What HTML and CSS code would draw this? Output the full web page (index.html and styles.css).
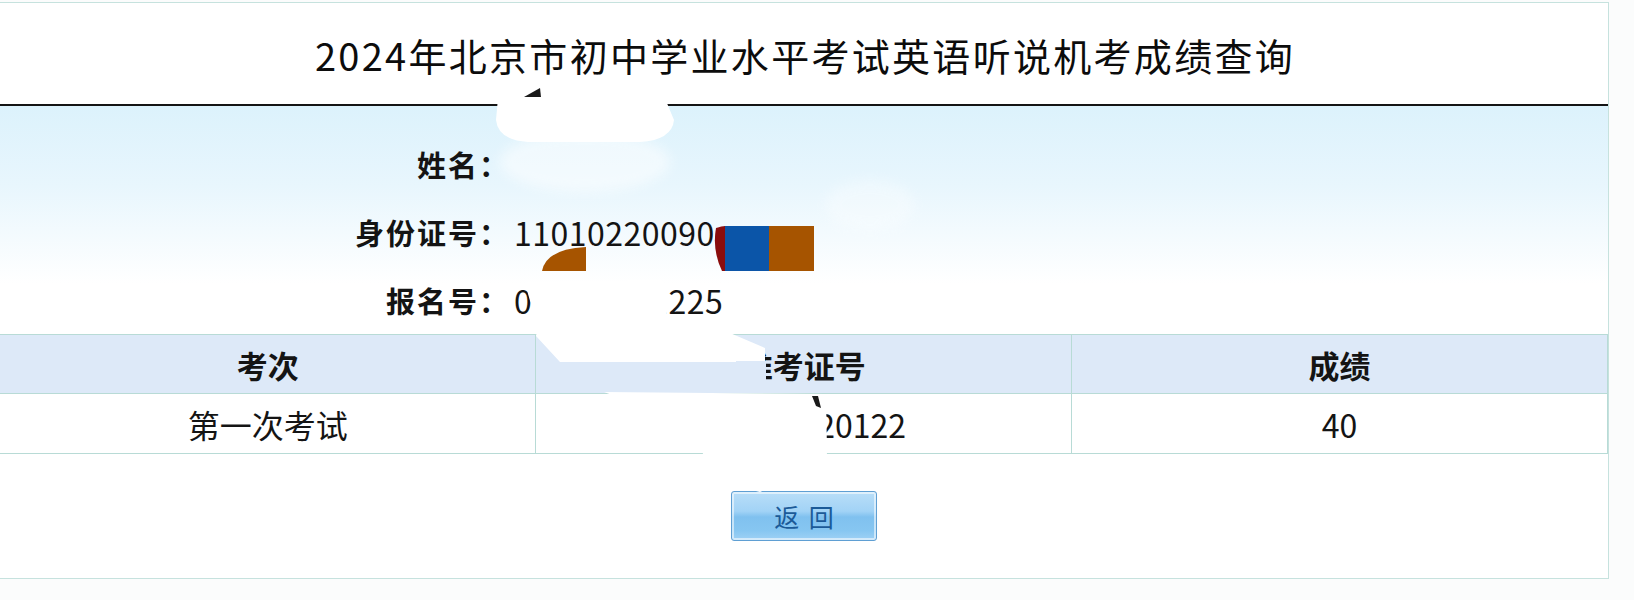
FILE: index.html
```html
<!DOCTYPE html>
<html lang="zh-CN">
<head>
<meta charset="utf-8">
<title>2024年北京市初中学业水平考试英语听说机考成绩查询</title>
<link rel="stylesheet" href="styles.css">
</head>
<body>
<div class="page">
  <div class="box">
    <div class="header">
      <h1 class="title">2024年北京市初中学业水平考试英语听说机考成绩查询</h1>
    </div>
    <div class="info">
      <div class="row"><span class="label">姓名：</span><span class="value"></span></div>
      <div class="row"><span class="label">身份证号：</span><span class="value">11010220090</span></div>
      <div class="row"><span class="label">报名号：</span><span class="value">0<span class="gap"></span>1225</span></div>
    </div>
    <table class="scores">
      <thead>
        <tr><th>考次</th><th>准考证号</th><th>成绩</th></tr>
      </thead>
      <tbody>
        <tr><td>第一次考试</td><td><span class="gap-sm"></span>20122</td><td>40</td></tr>
      </tbody>
    </table>
    <div class="actions">
      <button class="btn" type="button">返 回</button>
    </div>
  </div>
  <svg class="mask" width="1634" height="600" viewBox="0 0 1634 600" aria-hidden="true">
    <defs>
      <filter id="soft" x="-20%" y="-20%" width="140%" height="140%"><feGaussianBlur stdDeviation="6"/></filter>
    </defs>
    <ellipse cx="585" cy="162" rx="85" ry="30" fill="#ffffff" opacity="0.5" filter="url(#soft)"/>
    <ellipse cx="870" cy="205" rx="45" ry="25" fill="#ffffff" opacity="0.3" filter="url(#soft)"/>
    <path d="M498 98 Q585 88 664 96 L674 120 Q672 140 640 142 L528 142 Q498 140 496 120 Z" fill="#ffffff"/>
    <polygon points="524,97 540,88 541,97" fill="#1a1a1a"/>
    <path d="M716 228 Q722 226 725 226 L725 271 L722 271 Q712 250 716 228 Z" fill="#8a0d0d"/>
    <rect x="725" y="226" width="44" height="45" fill="#0b55a8"/>
    <rect x="769" y="226" width="45" height="45" fill="#a65400"/>
    <path d="M542 271 Q546 249 586 247 L586 271 Z" fill="#a65400"/>
    <path d="M527 282 L662 280 Q670 296 666 318 L700 322 L730 333 L765 348 L765 362 L560 362 L536 336 L540 318 Q526 300 527 282 Z" fill="#ffffff"/>
    <rect x="736" y="361" width="30" height="31" fill="#dde9f8"/>
    <path d="M604 392 L826 394 L827 452 L826 470 L790 478 L760 492 L720 482 L702 452 L690 430 Q640 405 604 392 Z" fill="#ffffff"/>
    <polygon points="812,396 818,396 821,408 816,406" fill="#1a1a1a"/>
  </svg>
</div>
</body>
</html>
```

FILE: styles.css
```css
* {
  box-sizing: border-box;
}

html, body {
  margin: 0;
  padding: 0;
}

body {
  background: #fbfcfc;
  font-family: "Noto Sans CJK SC", "Noto Sans", sans-serif;
  color: #111111;
}

.page {
  position: relative;
  width: 1634px;
  height: 600px;
  padding-top: 2px;
  overflow: hidden;
}

.box {
  width: 1610px;
  height: 577px;
  margin-left: -1px;
  background: #ffffff;
  border: 1px solid #c6e2de;
  display: flex;
  flex-direction: column;
}

.header {
  height: 103px;
  border-bottom: 2px solid #141414;
  display: flex;
  align-items: center;
  justify-content: center;
}

.title {
  margin: 0;
  font-size: 38px;
  font-weight: 400;
  line-height: 1;
  letter-spacing: 2.3px;
  color: #0c0c0c;
  padding: 2px 0 0 2px;
}

.info {
  height: 228px;
  padding-top: 24px;
  background: linear-gradient(180deg, #dcf2fc 0%, #e8f6fd 35%, #ffffff 78%, #ffffff 100%);
}

.row {
  height: 68px;
  display: flex;
  align-items: center;
}

.label {
  width: 510px;
  text-align: right;
  font-size: 29px;
  font-weight: 700;
  letter-spacing: 2px;
  color: #141414;
}

.value {
  padding-left: 4px;
  font-size: 32px;
  color: #141414;
  letter-spacing: 0.5px;
}

.gap {
  display: inline-block;
  width: 118px;
}

.gap-sm {
  display: inline-block;
  width: 116px;
}

.scores {
  width: 100%;
  border-collapse: collapse;
  table-layout: fixed;
}

.scores th,
.scores td {
  border: 1px solid #b8dbd6;
  text-align: center;
  padding: 0;
}

.scores th {
  height: 59px;
  background: #dde9f8;
  font-size: 31px;
  font-weight: 700;
  color: #141414;
}

.scores td {
  height: 60px;
  font-size: 32px;
  font-weight: 400;
  color: #141414;
}

.scores tr > :first-child {
  border-left: none;
}

.actions {
  flex: 1;
  display: flex;
  justify-content: center;
  align-items: flex-start;
  padding-top: 37px;
}

.btn {
  width: 146px;
  height: 50px;
  border: 1px solid #5f9fd3;
  border-radius: 3px;
  background: linear-gradient(180deg, #b9def8 0%, #a2d3f6 40%, #80c1ef 52%, #86c6f1 80%, #9fd1f5 100%);
  box-shadow: inset 0 0 0 2px rgba(255, 255, 255, 0.55);
  font-family: "Noto Sans CJK SC", sans-serif;
  font-size: 25px;
  color: #1b5a98;
  letter-spacing: 2px;
  padding: 0 0 0 2px;
  line-height: 1;
}

.mask {
  position: absolute;
  left: 0;
  top: 0;
  pointer-events: none;
}
```
